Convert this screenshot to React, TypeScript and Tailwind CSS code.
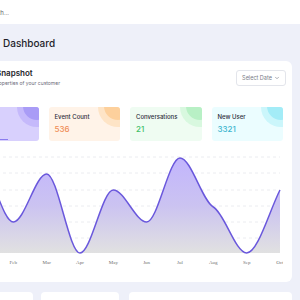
import React from "react";
import { ChevronDown } from "lucide-react";

const months = ["Jan", "Feb", "Mar", "Apr", "May", "Jun", "Jul", "Aug", "Sep", "Oct"];
const values = [17, 74, 26, 105, 42, 74, 10, 59, 105, 42];
// slope at each point (dy/dx), extrema stay flat
const slopes = [0, 0, 0, 0, 0, 0, 0, 0.55, 0, -2];

const STEP = 33.33;
const X0 = 13;
const BASE = 105;

function buildPath() {
  let d = `M ${X0} ${values[0]}`;
  for (let i = 0; i < values.length - 1; i++) {
    const x0 = X0 + i * STEP;
    const x1 = x0 + STEP;
    const t = STEP / 3;
    d += ` C ${x0 + t} ${values[i] + slopes[i] * t}, ${x1 - t} ${values[i + 1] - slopes[i + 1] * t}, ${x1} ${values[i + 1]}`;
  }
  return d;
}

const stats = [
  { title: "Sessions", value: "128", bg: "bg-[#d8d0fd]", ring: "bg-[#c5b9fb]", dot: "bg-[#a99cf6]", text: "text-[#7c6cf0]", line: true },
  { title: "Event Count", value: "536", bg: "bg-[#fff3e8]", ring: "bg-[#fee4c6]", dot: "bg-[#fdd09c]", text: "text-[#f08c55]" },
  { title: "Conversations", value: "21", bg: "bg-[#effcf2]", ring: "bg-[#d8f8df]", dot: "bg-[#b8f0c5]", text: "text-[#3fbf68]" },
  { title: "New User", value: "3321", bg: "bg-[#ebfdff]", ring: "bg-[#cbf6fb]", dot: "bg-[#a3ecf7]", text: "text-[#3bb5cf]" },
];

const StatCard = ({ s }: { s: (typeof stats)[number] }) => (
  <div className={`relative overflow-hidden rounded-[3px] ${s.bg} pt-[6px] pl-[6px]`}>
    <div className={`absolute -top-[20px] -right-[18px] size-[40px] rounded-full ${s.ring}`} />
    <div className={`absolute -top-[15px] -right-[12px] size-[28px] rounded-full ${s.dot}`} />
    <div className="relative text-[6px] leading-[8px] font-medium text-[#2d2d3a]">{s.title}</div>
    <div className={`relative mt-[3px] text-[8px] leading-[10px] font-medium ${s.text}`}>{s.value}</div>
    {s.line && <div className="absolute bottom-[1px] left-[6px] w-[35px] h-[1px] bg-[#8a7bef]" />}
  </div>
);

const Chart = () => {
  const line = buildPath();
  const lastX = X0 + (values.length - 1) * STEP;
  const area = `${line} L ${lastX} ${BASE} L ${X0} ${BASE} Z`;
  return (
    <svg width="316" height="120" className="mt-[7px] block">
      <defs>
        <linearGradient id="fillGrad" gradientUnits="userSpaceOnUse" x1="0" y1="10" x2="0" y2="105">
          <stop offset="0" stopColor="#c2b5fd" />
          <stop offset="0.5" stopColor="#cbc3f1" />
          <stop offset="1" stopColor="#e1e1e1" />
        </linearGradient>
      </defs>
      {[9, 25, 42, 58, 74, 90].map((y) => (
        <line key={y} x1="0" x2={lastX} y1={y} y2={y} stroke="#e6e7ec" strokeWidth="0.8" strokeDasharray="3 3" />
      ))}
      <path d={area} fill="url(#fillGrad)" />
      <path d={line} fill="none" stroke="#6a58dc" strokeWidth="1.5" />
      {months.map((m, i) => (
        <text
          key={m}
          x={X0 + i * STEP}
          y="116"
          textAnchor="middle"
          fontSize="5"
          fill="#6f6f6f"
          fontFamily="'Liberation Serif', serif"
        >
          {m}
        </text>
      ))}
    </svg>
  );
};

export default function App() {
  return (
    <div className="w-[300px] h-[300px] overflow-hidden bg-[#eef0f9] font-['Inter',sans-serif]">
      <header className="h-[24px] bg-white flex items-center">
        <span className="-ml-[16px] text-[6px] text-[#666]">Search...</span>
      </header>

      <main className="-ml-[42px] w-[334px]">
        <h1 className="pt-[12px] pl-[45px] text-[10px] leading-[14px] font-medium text-[#1e1e2a]">Dashboard</h1>

        <section className="mt-[11px] bg-white rounded-[6px] px-[9px] pb-[14px]">
          <div className="h-[46px] flex justify-between items-start pt-[7px] pl-[29px] -mr-[3px]">
            <div>
              <div className="text-[8px] leading-[10px] font-semibold text-[#1e1e2a]">Snapshot</div>
              <div className="mt-[2px] -ml-[2px] text-[5px] leading-[7px] text-[#6b6b78]">properties of your customer</div>
            </div>
            <button className="mt-[2px] h-[16px] w-[50px] flex items-center justify-center gap-[2px] border border-[#e3e5eb] rounded-[3px] text-[5.5px] text-[#7a7d88]">
              Select Date
              <ChevronDown className="size-[6px]" strokeWidth={2.5} />
            </button>
          </div>

          <div className="grid grid-cols-4 gap-[10px] h-[34px]">
            {stats.map((s) => (
              <StatCard key={s.title} s={s} />
            ))}
          </div>

          <Chart />
        </section>

        <div className="mt-[10px] flex gap-[8px]">
          <div className="w-[75px] h-[40px] bg-white rounded-[4px]" />
          <div className="w-[78px] h-[40px] bg-white rounded-[4px]" />
          <div className="ml-[2px] flex-1 h-[40px] bg-white rounded-[4px]" />
        </div>
      </main>
    </div>
  );
}
